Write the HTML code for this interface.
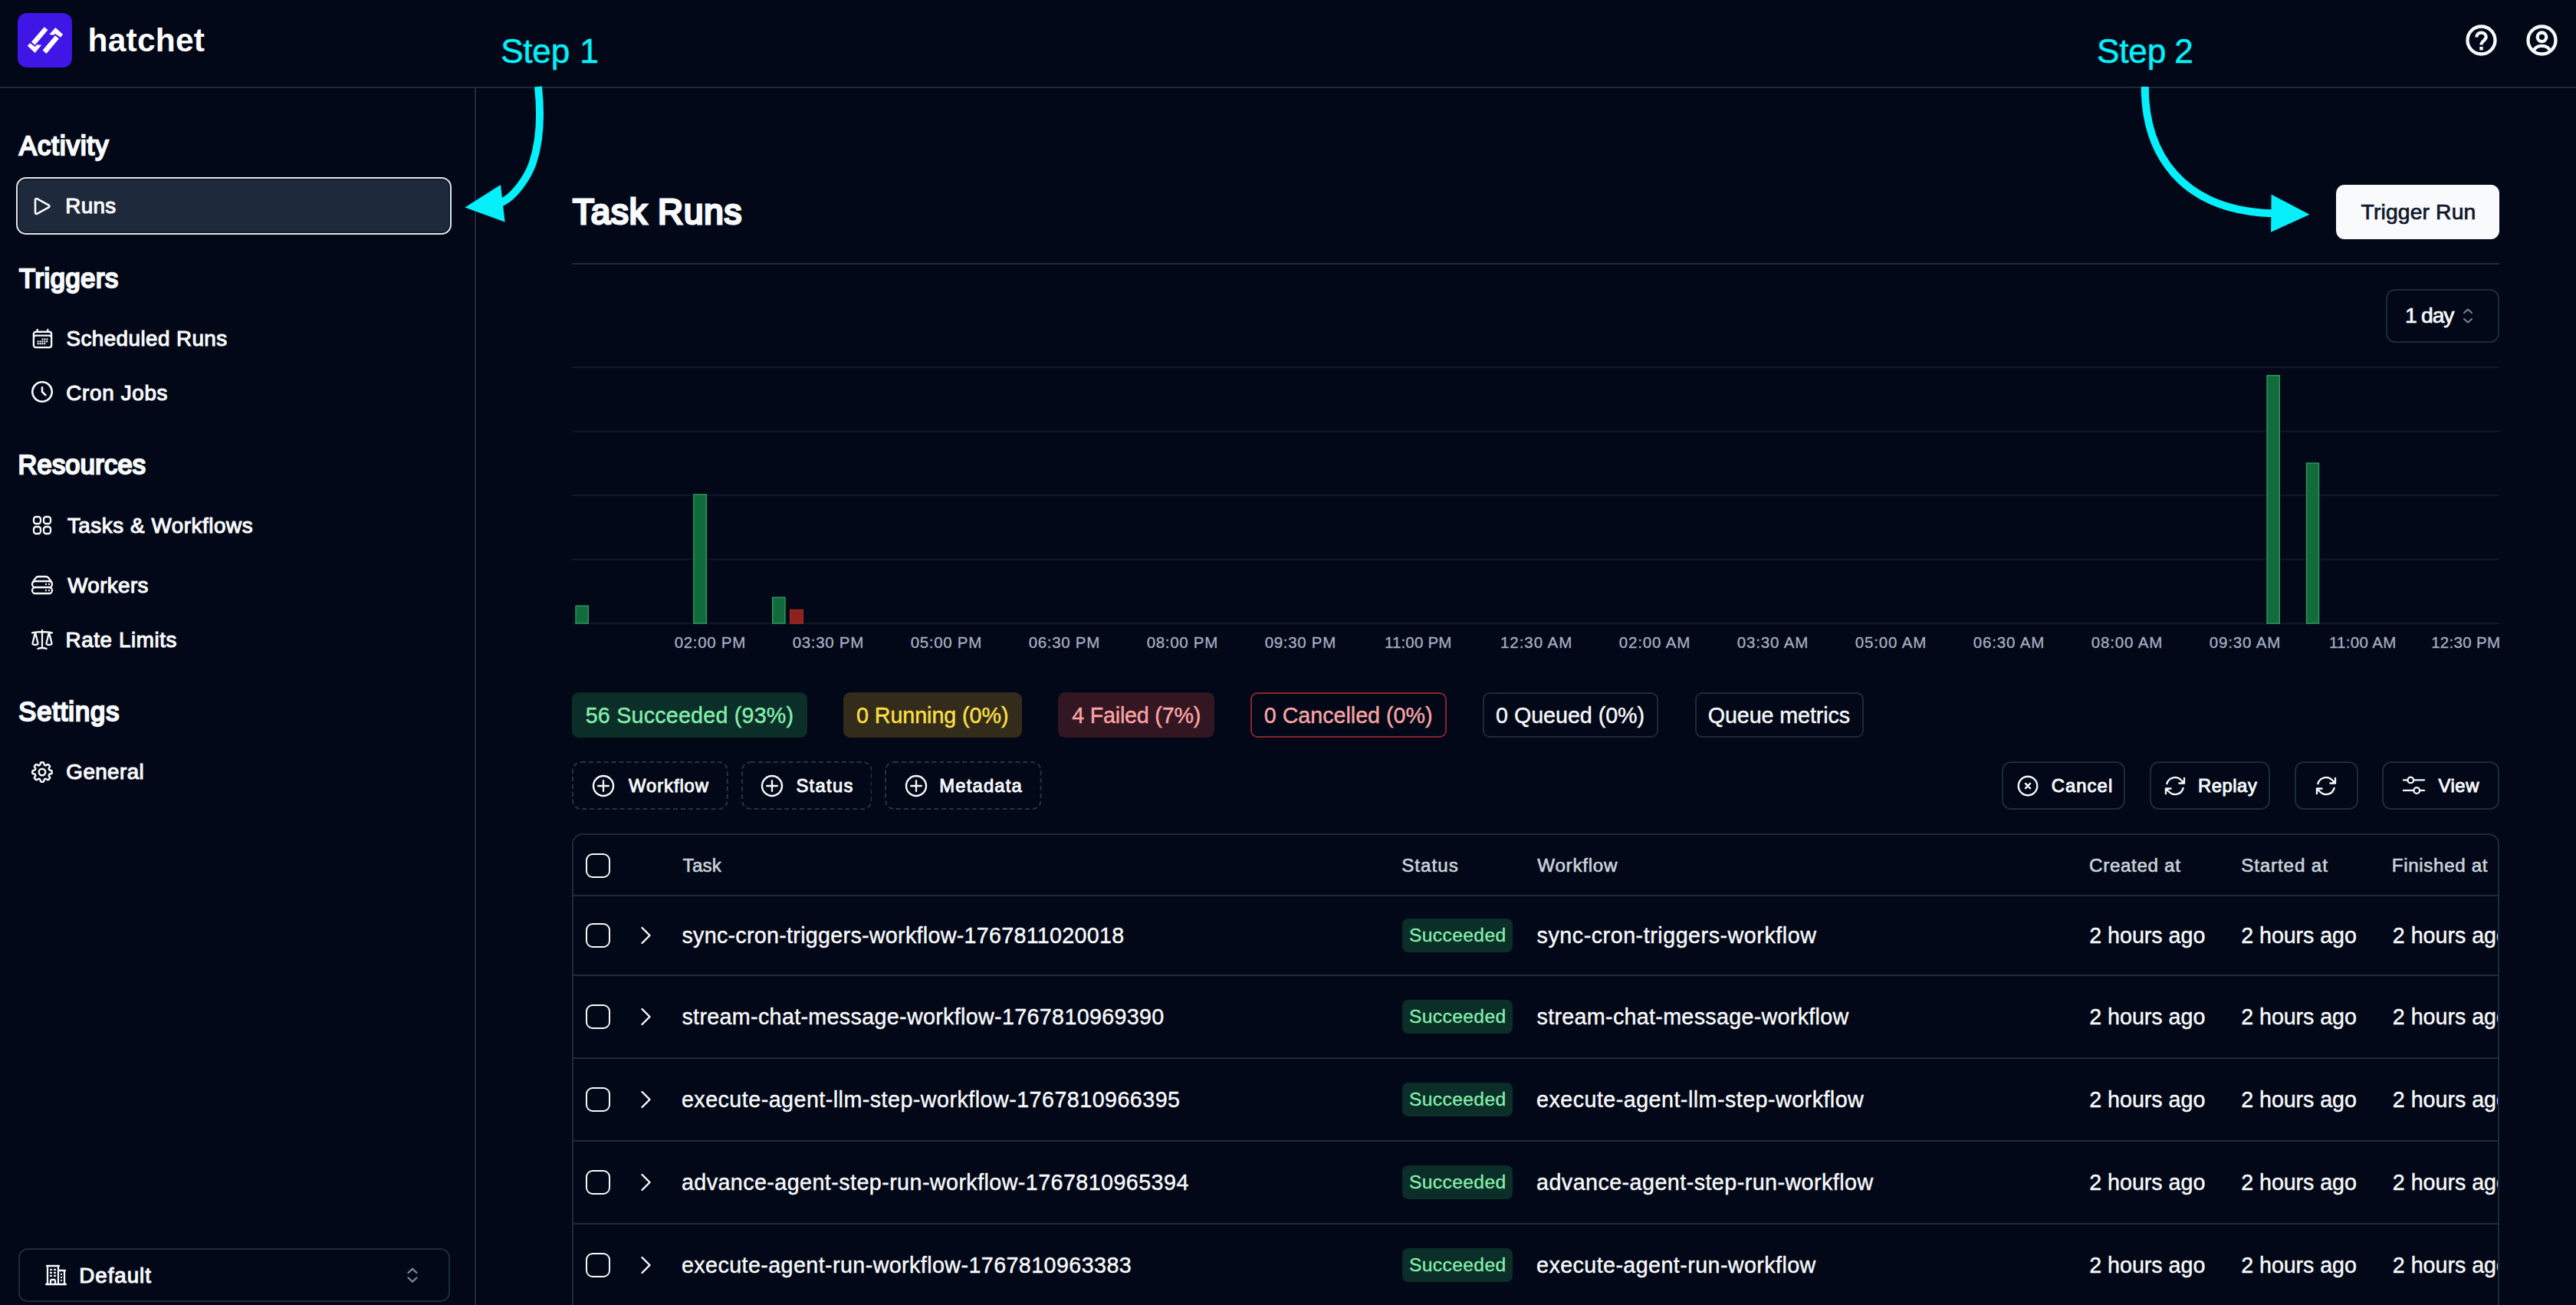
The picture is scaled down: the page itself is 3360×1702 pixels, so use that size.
<!DOCTYPE html>
<html lang="en"><head><meta charset="utf-8"><title>Task Runs - Hatchet</title>
<style>
html,body{margin:0;padding:0;background:#020817;}
body{width:3360px;height:1702px;position:relative;overflow:hidden;font-family:"Liberation Sans",sans-serif;color:#f8fafc;}
.t{position:absolute;white-space:nowrap;margin:0;padding:0;}
.b{position:absolute;box-sizing:border-box;margin:0;padding:0;}
</style></head><body>
<header>
<div class="b" style="left:0px;top:113.4px;width:3360px;height:2.0px;background:#1e293b;"></div>
<div class="b" style="left:23px;top:17px;width:71px;height:71px;background:#3f16e6;border-radius:12px;"></div>
<svg class="b" style="left:23px;top:17px;" width="71" height="71" viewBox="23 17 71 71" fill="none"><g fill="#ffffff"><polygon points="57.7,35.2 62.5,39.1 45.7,58.8 40.9,54.7"/><polygon points="39.1,56.2 45.7,60.9 48.4,58.2 54.1,58.8 45.7,69 35.8,59.7"/><polygon points="72,46.3 76.8,50.5 60.4,69.9 55.6,65.4"/><polygon points="72.3,36.1 82.2,45.1 78.9,48.7 72,43.9 69.6,45.7 64.3,45.1"/></g></svg>
<div class="t" style="left:114.60px;top:32.05px;font-size:42.5px;line-height:42.5px;letter-spacing:0.213px;color:#ffffff;font-weight:700;">hatchet</div>
<svg class="b" style="left:3212px;top:28px;" width="49" height="49" viewBox="0 0 49 49" fill="none"><circle cx="24.5" cy="24.5" r="18" stroke="#f8fafc" stroke-width="4.300"/><path d="M18.3 20.6c0-3.4 2.7-5.9 6.2-5.9s6.2 2.4 6.2 5.6c0 4.3-6.2 5.2-6.2 10.1" stroke="#f8fafc" stroke-width="4.300" fill="none"/><rect x="22.3" y="33" width="4.4" height="4.4" fill="#f8fafc"/></svg>
<svg class="b" style="left:3290.5px;top:28px;" width="49" height="49" viewBox="0 0 49 49" fill="none"><circle cx="24.5" cy="24.5" r="18" stroke="#f8fafc" stroke-width="4.300"/><circle cx="24.5" cy="20.3" r="5.8" stroke="#f8fafc" stroke-width="4.300"/><path d="M13.5 38.5c2-4.5 6-6.6 11-6.6s9 2.1 11 6.6" stroke="#f8fafc" stroke-width="4.300" fill="none"/></svg>
</header>
<aside>
<div class="b" style="left:618.5px;top:115px;width:2.0px;height:1587px;background:#1e293b;"></div>
<div class="t" style="left:25.01px;top:172.87px;font-size:34.4px;line-height:34.4px;letter-spacing:1.075px;color:#f8fafc;-webkit-text-stroke:2.27px #f8fafc;">Activity</div>
<div class="b" style="left:21px;top:231px;width:568px;height:75px;background:#1e293b;border:2.500px solid #dfe5ef;border-radius:13px;box-shadow:inset 0 0 0 1.400px #0c1424;"></div>
<svg class="b" style="left:39.00px;top:252.50px;" width="32" height="32" viewBox="0 0 24 24" fill="none"><g stroke="#f8fafc" stroke-width="1.95" stroke-linecap="round" stroke-linejoin="round"><path d="M5.25 5.653c0-.856.917-1.398 1.667-.986l11.54 6.347a1.125 1.125 0 0 1 0 1.972l-11.54 6.347a1.125 1.125 0 0 1-1.667-.986V5.653Z"/></g></svg>
<div class="t" style="left:85.28px;top:255.17px;font-size:27.8px;line-height:27.8px;letter-spacing:0.310px;color:#f8fafc;-webkit-text-stroke:1.06px #f8fafc;">Runs</div>
<div class="t" style="left:25.08px;top:346.27px;font-size:34.4px;line-height:34.4px;letter-spacing:0.609px;color:#f8fafc;-webkit-text-stroke:2.27px #f8fafc;">Triggers</div>
<svg class="b" style="left:39.50px;top:426.20px;" width="31" height="31" viewBox="0 0 24 24" fill="none"><g stroke="#f8fafc" stroke-width="1.8" stroke-linecap="round" stroke-linejoin="round"><path d="M6.75 3v2.25M17.25 3v2.25M3 18.75V7.5a2.25 2.25 0 0 1 2.25-2.25h13.5A2.25 2.25 0 0 1 21 7.5v11.25m-18 0A2.25 2.25 0 0 0 5.25 21h13.5A2.25 2.25 0 0 0 21 18.75m-18 0v-7.5A2.25 2.25 0 0 1 5.25 9h13.5A2.25 2.25 0 0 1 21 11.25v7.5m-9-6h.008v.008H12v-.008ZM12 15h.008v.008H12V15Zm0 2.25h.008v.008H12v-.008ZM9.75 15h.008v.008H9.75V15Zm0 2.25h.008v.008H9.75v-.008ZM7.5 15h.008v.008H7.5V15Zm0 2.25h.008v.008H7.5v-.008Zm6.75-4.5h.008v.008h-.008v-.008Zm0 2.25h.008v.008h-.008V15Zm0 2.25h.008v.008h-.008v-.008Zm2.25-4.5h.008v.008H16.5v-.008Zm0 2.25h.008v.008H16.5V15Z"/></g></svg>
<div class="t" style="left:86.48px;top:427.97px;font-size:27.8px;line-height:27.8px;letter-spacing:0.439px;color:#f8fafc;-webkit-text-stroke:1.06px #f8fafc;">Scheduled Runs</div>
<svg class="b" style="left:38.00px;top:494.20px;" width="34" height="34" viewBox="0 0 24 24" fill="none"><g stroke="#f8fafc" stroke-width="1.8" stroke-linecap="round" stroke-linejoin="round"><path d="M12 8v4l3 3m6-3a9 9 0 1 1-18 0 9 9 0 0 1 18 0z"/></g></svg>
<div class="t" style="left:86.35px;top:498.77px;font-size:27.8px;line-height:27.8px;letter-spacing:0.686px;color:#f8fafc;-webkit-text-stroke:1.06px #f8fafc;">Cron Jobs</div>
<div class="t" style="left:23.38px;top:589.46px;font-size:34.4px;line-height:34.4px;letter-spacing:0.280px;color:#f8fafc;-webkit-text-stroke:2.27px #f8fafc;">Resources</div>
<svg class="b" style="left:39.00px;top:668.80px;" width="32" height="32" viewBox="0 0 24 24" fill="none"><g stroke="#f8fafc" stroke-width="1.7" stroke-linecap="round" stroke-linejoin="round"><path d="M3.75 6A2.25 2.25 0 0 1 6 3.75h2.25A2.25 2.25 0 0 1 10.5 6v2.25a2.25 2.25 0 0 1-2.25 2.25H6a2.25 2.25 0 0 1-2.25-2.25V6ZM3.75 15.75A2.25 2.25 0 0 1 6 13.5h2.25a2.25 2.25 0 0 1 2.25 2.25V18a2.25 2.25 0 0 1-2.25 2.25H6A2.25 2.25 0 0 1 3.75 18v-2.25ZM13.5 6a2.25 2.25 0 0 1 2.25-2.25H18A2.25 2.25 0 0 1 20.25 6v2.25A2.25 2.25 0 0 1 18 10.5h-2.25a2.25 2.25 0 0 1-2.25-2.25V6ZM13.5 15.75a2.25 2.25 0 0 1 2.25-2.25H18a2.25 2.25 0 0 1 2.25 2.25V18A2.25 2.25 0 0 1 18 20.25h-2.25A2.25 2.25 0 0 1 13.5 18v-2.25Z"/></g></svg>
<div class="t" style="left:87.90px;top:671.77px;font-size:27.8px;line-height:27.8px;letter-spacing:0.561px;color:#f8fafc;-webkit-text-stroke:1.06px #f8fafc;">Tasks &amp; Workflows</div>
<svg class="b" style="left:39.00px;top:747.20px;" width="32" height="32" viewBox="0 0 24 24" fill="none"><g stroke="#f8fafc" stroke-width="1.7" stroke-linecap="round" stroke-linejoin="round"><path d="M5.25 14.25h13.5m-13.5 0a3 3 0 0 1-3-3m3 3a3 3 0 1 0 0 6h13.5a3 3 0 1 0 0-6m-16.5-3a3 3 0 0 1 3-3h13.5a3 3 0 0 1 3 3m-19.5 0a4.5 4.5 0 0 1 .9-2.7L5.737 5.1a3.375 3.375 0 0 1 2.7-1.35h7.126c1.062 0 2.062.5 2.7 1.35l2.587 3.45a4.5 4.5 0 0 1 .9 2.7m0 0a3 3 0 0 1-3 3m0 3h.008v.008h-.008v-.008Zm0-6h.008v.008h-.008v-.008Zm-3 6h.008v.008h-.008v-.008Zm0-6h.008v.008h-.008v-.008Z"/></g></svg>
<div class="t" style="left:88.20px;top:750.07px;font-size:27.8px;line-height:27.8px;letter-spacing:0.389px;color:#f8fafc;-webkit-text-stroke:1.06px #f8fafc;">Workers</div>
<svg class="b" style="left:39.00px;top:818.30px;" width="32" height="32" viewBox="0 0 24 24" fill="none"><g stroke="#f8fafc" stroke-width="1.7" stroke-linecap="round" stroke-linejoin="round"><path d="M12 3v17.25m0 0c-1.472 0-2.882.265-4.185.75M12 20.25c1.472 0 2.882.265 4.185.75M18.75 4.97A48.416 48.416 0 0 0 12 4.5c-2.291 0-4.545.16-6.75.47m13.5 0c1.01.143 2.01.317 3 .52m-3-.52 2.62 10.726c.122.499-.106 1.028-.589 1.202a5.988 5.988 0 0 1-2.031.352 5.988 5.988 0 0 1-2.031-.352c-.483-.174-.711-.703-.59-1.202L18.75 4.971Zm-16.5.52c.99-.203 1.99-.377 3-.52m0 0 2.62 10.726c.122.499-.106 1.028-.589 1.202a5.989 5.989 0 0 1-2.031.352 5.989 5.989 0 0 1-2.031-.352c-.483-.174-.711-.703-.59-1.202L5.25 4.971Z"/></g></svg>
<div class="t" style="left:85.48px;top:820.77px;font-size:27.8px;line-height:27.8px;letter-spacing:0.600px;color:#f8fafc;-webkit-text-stroke:1.06px #f8fafc;">Rate Limits</div>
<div class="t" style="left:24.21px;top:911.06px;font-size:34.4px;line-height:34.4px;letter-spacing:0.995px;color:#f8fafc;-webkit-text-stroke:2.27px #f8fafc;">Settings</div>
<svg class="b" style="left:38.00px;top:990.00px;" width="34" height="34" viewBox="0 0 24 24" fill="none"><g stroke="#f8fafc" stroke-width="1.75" stroke-linecap="round" stroke-linejoin="round"><path d="M10.343 3.94c.09-.542.56-.94 1.11-.94h1.093c.55 0 1.02.398 1.11.94l.149.894c.07.424.384.764.78.93.398.164.855.142 1.205-.108l.737-.527a1.125 1.125 0 0 1 1.45.12l.773.774c.39.389.44 1.002.12 1.45l-.527.737c-.25.35-.272.806-.107 1.204.165.397.505.71.93.78l.893.15c.543.09.94.559.94 1.109v1.094c0 .55-.397 1.02-.94 1.11l-.894.149c-.424.07-.764.383-.929.78-.165.398-.143.854.107 1.204l.527.738c.32.447.269 1.06-.12 1.45l-.774.773a1.125 1.125 0 0 1-1.449.12l-.738-.527c-.35-.25-.806-.272-1.203-.107-.398.165-.71.505-.781.929l-.149.894c-.09.542-.56.94-1.11.94h-1.094c-.55 0-1.019-.398-1.11-.94l-.148-.894c-.071-.424-.384-.764-.781-.93-.398-.164-.854-.142-1.204.108l-.738.527c-.447.32-1.06.269-1.45-.12l-.773-.774a1.125 1.125 0 0 1-.12-1.45l.527-.737c.25-.35.272-.806.108-1.204-.165-.397-.506-.71-.93-.78l-.894-.15c-.542-.09-.94-.56-.94-1.109v-1.094c0-.55.398-1.02.94-1.11l.894-.149c.424-.07.765-.383.93-.78.165-.398.143-.854-.108-1.204l-.526-.738a1.125 1.125 0 0 1 .12-1.45l.773-.773a1.125 1.125 0 0 1 1.45-.12l.737.527c.35.25.807.272 1.204.107.397-.165.71-.505.78-.929l.15-.894Z M15 12a3 3 0 1 1-6 0 3 3 0 0 1 6 0Z"/></g></svg>
<div class="t" style="left:86.35px;top:993.27px;font-size:27.8px;line-height:27.8px;letter-spacing:0.411px;color:#f8fafc;-webkit-text-stroke:1.06px #f8fafc;">General</div>
<div class="b" style="left:24px;top:1628px;width:563px;height:70px;border:2px solid #1e293b;border-radius:12px;"></div>
<svg class="b" style="left:56.50px;top:1647.00px;" width="32" height="32" viewBox="0 0 24 24" fill="none"><g stroke="#f8fafc" stroke-width="1.7" stroke-linecap="round" stroke-linejoin="round"><path d="M2.25 21h19.5m-18-18v18m10.5-18v18m6-13.5V21M6.75 6.75h.75m-.75 3h.75m-.75 3h.75m3-6h.75m-.75 3h.75m-.75 3h.75M6.75 21v-3.375c0-.621.504-1.125 1.125-1.125h2.25c.621 0 1.125.504 1.125 1.125V21M3 3h12m-.75 4.500H21m-3.750 3.750h.008v.008h-.008v-.008Zm0 3h.008v.008h-.008v-.008Zm0 3h.008v.008h-.008v-.008Z"/></g></svg>
<div class="t" style="left:103.28px;top:1649.57px;font-size:27.8px;line-height:27.8px;letter-spacing:0.931px;color:#f8fafc;-webkit-text-stroke:1.06px #f8fafc;">Default</div>
<svg class="b" style="left:526px;top:1651px;" width="24" height="24" viewBox="0 0 24 24" fill="none"><g stroke="#7b8496" stroke-width="2.4" stroke-linecap="round" stroke-linejoin="round"><path d="M6.5 9 12 3.8 17.500 9"/><path d="M6.5 15.500 12 20.700 17.500 15.500"/></g></svg>
</aside>
<main>
<div class="t" style="left:747.11px;top:254.29px;font-size:45.8px;line-height:45.8px;letter-spacing:0.819px;color:#f8fafc;-webkit-text-stroke:3.02px #f8fafc;">Task Runs</div>
<div class="b" style="left:3047px;top:241px;width:213px;height:71px;background:#f8fafc;border-radius:11px;"></div>
<div class="t" style="left:3079.53px;top:261.60px;font-size:28.3px;line-height:28.3px;letter-spacing:0.141px;color:#0f172a;-webkit-text-stroke:0.71px #0f172a;">Trigger Run</div>
<div class="b" style="left:746px;top:343px;width:2514px;height:2px;background:#1e293b;"></div>
<div class="b" style="left:3112px;top:377px;width:148px;height:70px;border:2px solid #1e293b;border-radius:12px;"></div>
<div class="t" style="left:3136.93px;top:397.00px;font-size:28.3px;line-height:28.3px;letter-spacing:-1.201px;color:#f8fafc;-webkit-text-stroke:0.71px #f8fafc;">1 day</div>
<svg class="b" style="left:3209px;top:400px;" width="20" height="24" viewBox="0 0 20 24" fill="none"><g stroke="#7b8496" stroke-width="2" stroke-linecap="round" stroke-linejoin="round"><path d="M5 8 10 3.500 15 8"/><path d="M5 16 10 20.500 15 16"/></g></svg>
<svg class="b" style="left:0px;top:0px;" width="3360" height="900" viewBox="0 0 3360 900" fill="none"><rect x="746" y="478" width="2514" height="2" fill="#0f1727"/><rect x="746" y="561.5" width="2514" height="2" fill="#0f1727"/><rect x="746" y="645" width="2514" height="2" fill="#0f1727"/><rect x="746" y="728.5" width="2514" height="2" fill="#0f1727"/><rect x="746" y="812" width="2514" height="2" fill="#0f1727"/><rect x="751.05" y="790.25" width="16.200000000000045" height="22.75" fill="#126b3c" stroke="#2b9659" stroke-width="1.5"/><rect x="904.85" y="644.95" width="16.5" height="168.04999999999995" fill="#126b3c" stroke="#2b9659" stroke-width="1.5"/><rect x="1007.75" y="779.15" width="16.200000000000045" height="33.85000000000002" fill="#126b3c" stroke="#2b9659" stroke-width="1.5"/><rect x="1030.75" y="795.45" width="16.5" height="17.549999999999955" fill="#8f211d" stroke="#9c2a24" stroke-width="1.5"/><rect x="2957.05" y="489.75" width="16.199999999999818" height="323.25" fill="#126b3c" stroke="#2b9659" stroke-width="1.5"/><rect x="3008.55" y="604.05" width="16.0" height="208.95000000000005" fill="#126b3c" stroke="#2b9659" stroke-width="1.5"/></svg>
<div class="t" style="left:879.64px;top:828.31px;font-size:20.5px;line-height:20.5px;letter-spacing:0.709px;color:#a7afc3;-webkit-text-stroke:0.29px #a7afc3;">02:00 PM</div>
<div class="t" style="left:1033.64px;top:828.31px;font-size:20.5px;line-height:20.5px;letter-spacing:0.709px;color:#a7afc3;-webkit-text-stroke:0.29px #a7afc3;">03:30 PM</div>
<div class="t" style="left:1187.64px;top:828.31px;font-size:20.5px;line-height:20.5px;letter-spacing:0.709px;color:#a7afc3;-webkit-text-stroke:0.29px #a7afc3;">05:00 PM</div>
<div class="t" style="left:1341.64px;top:828.31px;font-size:20.5px;line-height:20.5px;letter-spacing:0.709px;color:#a7afc3;-webkit-text-stroke:0.29px #a7afc3;">06:30 PM</div>
<div class="t" style="left:1495.64px;top:828.31px;font-size:20.5px;line-height:20.5px;letter-spacing:0.709px;color:#a7afc3;-webkit-text-stroke:0.29px #a7afc3;">08:00 PM</div>
<div class="t" style="left:1649.64px;top:828.31px;font-size:20.5px;line-height:20.5px;letter-spacing:0.709px;color:#a7afc3;-webkit-text-stroke:0.29px #a7afc3;">09:30 PM</div>
<div class="t" style="left:1805.89px;top:828.31px;font-size:20.5px;line-height:20.5px;letter-spacing:0.173px;color:#a7afc3;-webkit-text-stroke:0.29px #a7afc3;">11:00 PM</div>
<div class="t" style="left:1956.89px;top:828.31px;font-size:20.5px;line-height:20.5px;letter-spacing:0.976px;color:#a7afc3;-webkit-text-stroke:0.29px #a7afc3;">12:30 AM</div>
<div class="t" style="left:2111.64px;top:828.31px;font-size:20.5px;line-height:20.5px;letter-spacing:0.869px;color:#a7afc3;-webkit-text-stroke:0.29px #a7afc3;">02:00 AM</div>
<div class="t" style="left:2265.64px;top:828.31px;font-size:20.5px;line-height:20.5px;letter-spacing:0.869px;color:#a7afc3;-webkit-text-stroke:0.29px #a7afc3;">03:30 AM</div>
<div class="t" style="left:2419.64px;top:828.31px;font-size:20.5px;line-height:20.5px;letter-spacing:0.869px;color:#a7afc3;-webkit-text-stroke:0.29px #a7afc3;">05:00 AM</div>
<div class="t" style="left:2573.64px;top:828.31px;font-size:20.5px;line-height:20.5px;letter-spacing:0.869px;color:#a7afc3;-webkit-text-stroke:0.29px #a7afc3;">06:30 AM</div>
<div class="t" style="left:2727.64px;top:828.31px;font-size:20.5px;line-height:20.5px;letter-spacing:0.869px;color:#a7afc3;-webkit-text-stroke:0.29px #a7afc3;">08:00 AM</div>
<div class="t" style="left:2881.64px;top:828.31px;font-size:20.5px;line-height:20.5px;letter-spacing:0.869px;color:#a7afc3;-webkit-text-stroke:0.29px #a7afc3;">09:30 AM</div>
<div class="t" style="left:3037.89px;top:828.31px;font-size:20.5px;line-height:20.5px;letter-spacing:0.334px;color:#a7afc3;-webkit-text-stroke:0.29px #a7afc3;">11:00 AM</div>
<div class="t" style="left:3171.14px;top:828.31px;font-size:20.5px;line-height:20.5px;letter-spacing:0.316px;color:#a7afc3;-webkit-text-stroke:0.29px #a7afc3;">12:30 PM</div>
<div class="b" style="left:746.4px;top:903px;width:306.30000000000007px;height:58.5px;background:#0b2e28;border-radius:9px;"></div>
<div class="t" style="left:763.68px;top:918.75px;font-size:28.7px;line-height:28.7px;letter-spacing:0.208px;color:#86efac;-webkit-text-stroke:0.4px #86efac;">56 Succeeded (93%)</div>
<div class="b" style="left:1099.7px;top:903px;width:233.70000000000005px;height:58.5px;background:#342c1a;border-radius:9px;"></div>
<div class="t" style="left:1116.98px;top:918.75px;font-size:28.7px;line-height:28.7px;letter-spacing:-0.064px;color:#fde047;-webkit-text-stroke:0.4px #fde047;">0 Running (0%)</div>
<div class="b" style="left:1380.3px;top:903px;width:203.4000000000001px;height:58.5px;background:#321622;border-radius:9px;"></div>
<div class="t" style="left:1398.18px;top:918.75px;font-size:28.7px;line-height:28.7px;letter-spacing:-0.209px;color:#fca5a5;-webkit-text-stroke:0.4px #fca5a5;">4 Failed (7%)</div>
<div class="b" style="left:1631px;top:903px;width:255.5px;height:58.5px;border:2px solid #88252a;border-radius:9px;"></div>
<div class="t" style="left:1648.78px;top:918.75px;font-size:28.7px;line-height:28.7px;letter-spacing:-0.023px;color:#fca5a5;-webkit-text-stroke:0.4px #fca5a5;">0 Cancelled (0%)</div>
<div class="b" style="left:1934px;top:903px;width:229px;height:58.5px;border:2px solid #1e293b;border-radius:9px;"></div>
<div class="t" style="left:1951.08px;top:918.75px;font-size:28.7px;line-height:28.7px;letter-spacing:-0.047px;color:#f8fafc;-webkit-text-stroke:0.4px #f8fafc;">0 Queued (0%)</div>
<div class="b" style="left:2210.6px;top:903px;width:220.0999999999999px;height:58.5px;border:2px solid #1e293b;border-radius:9px;"></div>
<div class="t" style="left:2227.73px;top:918.75px;font-size:28.7px;line-height:28.7px;letter-spacing:-0.092px;color:#f8fafc;-webkit-text-stroke:0.4px #f8fafc;">Queue metrics</div>
<svg class="b" style="left:746.4px;top:993px" width="203.8" height="63" fill="none"><rect x="1" y="1" width="201.8" height="61" rx="11" stroke="#283145" stroke-width="2" stroke-dasharray="6 3.900"/></svg>
<svg class="b" style="left:771.20px;top:1008.8px;" width="32" height="32" viewBox="0 0 32 32" fill="none"><g stroke="#f8fafc" fill="none" stroke-linecap="round"><circle cx="16" cy="16" r="13" stroke-width="2.4"/><path d="M16 9.100v13.800M9.100 16h13.800" stroke-width="2.300"/></g></svg>
<div class="t" style="left:820.12px;top:1013.15px;font-size:23.8px;line-height:23.8px;letter-spacing:0.921px;color:#f8fafc;-webkit-text-stroke:0.9px #f8fafc;">Workflow</div>
<svg class="b" style="left:966.5px;top:993px" width="170.8" height="63" fill="none"><rect x="1" y="1" width="168.8" height="61" rx="11" stroke="#283145" stroke-width="2" stroke-dasharray="6 3.900"/></svg>
<svg class="b" style="left:991.30px;top:1008.8px;" width="32" height="32" viewBox="0 0 32 32" fill="none"><g stroke="#f8fafc" fill="none" stroke-linecap="round"><circle cx="16" cy="16" r="13" stroke-width="2.4"/><path d="M16 9.100v13.800M9.100 16h13.800" stroke-width="2.300"/></g></svg>
<div class="t" style="left:1038.42px;top:1013.15px;font-size:23.8px;line-height:23.8px;letter-spacing:1.317px;color:#f8fafc;-webkit-text-stroke:0.9px #f8fafc;">Status</div>
<svg class="b" style="left:1154px;top:993px" width="204.6" height="63" fill="none"><rect x="1" y="1" width="202.6" height="61" rx="11" stroke="#283145" stroke-width="2" stroke-dasharray="6 3.900"/></svg>
<svg class="b" style="left:1178.80px;top:1008.8px;" width="32" height="32" viewBox="0 0 32 32" fill="none"><g stroke="#f8fafc" fill="none" stroke-linecap="round"><circle cx="16" cy="16" r="13" stroke-width="2.4"/><path d="M16 9.100v13.800M9.100 16h13.800" stroke-width="2.300"/></g></svg>
<div class="t" style="left:1225.17px;top:1013.15px;font-size:23.8px;line-height:23.8px;letter-spacing:1.206px;color:#f8fafc;-webkit-text-stroke:0.9px #f8fafc;">Metadata</div>
<div class="b" style="left:2611px;top:993px;width:161px;height:62.59999999999991px;border:2px solid #1e293b;border-radius:12px;"></div>
<svg class="b" style="left:2628.50px;top:1008.60px;" width="32" height="32" viewBox="0 0 24 24" fill="none"><g stroke="#f8fafc" stroke-width="1.75" stroke-linecap="round" stroke-linejoin="round"><circle cx="12" cy="12" r="9.200"/><path d="m9.700 9.700 4.600 4.600m0-4.600-4.600 4.600"/></g></svg>
<div class="t" style="left:2675.70px;top:1013.15px;font-size:23.8px;line-height:23.8px;letter-spacing:1.085px;color:#f8fafc;-webkit-text-stroke:0.9px #f8fafc;">Cancel</div>
<div class="b" style="left:2804px;top:993px;width:157px;height:62.59999999999991px;border:2px solid #1e293b;border-radius:12px;"></div>
<svg class="b" style="left:2821.00px;top:1008.60px;" width="32" height="32" viewBox="0 0 24 24" fill="none"><g stroke="#f8fafc" stroke-width="1.75" stroke-linecap="round" stroke-linejoin="round"><path d="M16.023 9.348h4.992v-.001M2.985 19.644v-4.992m0 0h4.992m-4.993 0 3.181 3.183a8.25 8.25 0 0 0 13.803-3.700M4.031 9.865a8.25 8.25 0 0 1 13.803-3.700l3.181 3.182m0-4.991v4.990"/></g></svg>
<div class="t" style="left:2866.97px;top:1013.15px;font-size:23.8px;line-height:23.8px;letter-spacing:0.550px;color:#f8fafc;-webkit-text-stroke:0.9px #f8fafc;">Replay</div>
<div class="b" style="left:2993px;top:993px;width:82.5px;height:62.59999999999991px;border:2px solid #1e293b;border-radius:12px;"></div>
<svg class="b" style="left:3018.20px;top:1008.60px;" width="32" height="32" viewBox="0 0 24 24" fill="none"><g stroke="#f8fafc" stroke-width="1.75" stroke-linecap="round" stroke-linejoin="round"><path d="M16.023 9.348h4.992v-.001M2.985 19.644v-4.992m0 0h4.992m-4.993 0 3.181 3.183a8.25 8.25 0 0 0 13.803-3.700M4.031 9.865a8.25 8.25 0 0 1 13.803-3.700l3.181 3.182m0-4.991v4.990"/></g></svg>
<div class="b" style="left:3107px;top:993px;width:153px;height:62.59999999999991px;border:2px solid #1e293b;border-radius:12px;"></div>
<svg class="b" style="left:3132.50px;top:1009.10px;" width="31" height="31" viewBox="0 0 24 24" fill="none"><g stroke="#f8fafc" stroke-width="1.75" stroke-linecap="round" stroke-linejoin="round"><path d="M1.500 6.500h4.300M11.700 6.500h10.800M1.500 17h10.400M17.900 17h4.600"/><circle cx="8.750" cy="6.500" r="2.950"/><circle cx="14.900" cy="17" r="2.950"/></g></svg>
<div class="t" style="left:3180.52px;top:1013.15px;font-size:23.8px;line-height:23.8px;letter-spacing:0.564px;color:#f8fafc;-webkit-text-stroke:0.9px #f8fafc;">View</div>
<section>
<div class="b" style="left:746px;top:1087px;width:2514px;height:643px;border:2px solid #1e293b;border-radius:14px 14px 0 0;"></div>
<div class="b" style="left:764px;top:1113px;width:32px;height:32px;border:2.5px solid #f8fafc;border-radius:9px;"></div>
<div class="t" style="left:890.60px;top:1117.40px;font-size:24.2px;line-height:24.2px;letter-spacing:0.209px;color:#cbd2dd;-webkit-text-stroke:0.6px #cbd2dd;">Task</div>
<div class="t" style="left:1828.18px;top:1117.40px;font-size:24.2px;line-height:24.2px;letter-spacing:1.038px;color:#cbd2dd;-webkit-text-stroke:0.6px #cbd2dd;">Status</div>
<div class="t" style="left:2005.28px;top:1117.40px;font-size:24.2px;line-height:24.2px;letter-spacing:0.751px;color:#cbd2dd;-webkit-text-stroke:0.6px #cbd2dd;">Workflow</div>
<div class="t" style="left:2725.05px;top:1117.40px;font-size:24.2px;line-height:24.2px;letter-spacing:0.662px;color:#cbd2dd;-webkit-text-stroke:0.6px #cbd2dd;">Created at</div>
<div class="t" style="left:2923.18px;top:1117.40px;font-size:24.2px;line-height:24.2px;letter-spacing:0.871px;color:#cbd2dd;-webkit-text-stroke:0.6px #cbd2dd;">Started at</div>
<div class="t" style="left:3119.80px;top:1117.40px;font-size:24.2px;line-height:24.2px;letter-spacing:0.644px;color:#cbd2dd;-webkit-text-stroke:0.6px #cbd2dd;">Finished at</div>
<div class="b" style="left:748px;top:1089px;width:2510px;height:613px;overflow:hidden;">
<div class="b" style="left:0px;top:78px;width:2510px;height:2px;background:#1e293b;"></div>
<div class="b" style="left:16px;top:115.0px;width:32px;height:32.0px;border:2.5px solid #f8fafc;border-radius:9px;"></div>
<svg class="b" style="left:84px;top:117.0px" width="22" height="28" viewBox="0 0 22 28" fill="none"><path d="M5.500 4 15.500 14 5.500 24" stroke="#f8fafc" stroke-width="2.400" stroke-linecap="round" stroke-linejoin="round"/></svg>
<div class="t" style="left:141.45px;top:116.75px;font-size:28.7px;line-height:28.7px;letter-spacing:0.278px;color:#f8fafc;-webkit-text-stroke:0.4px #f8fafc;">sync-cron-triggers-workflow-1767811020018</div>
<div class="b" style="left:1080.5px;top:109.20000000000005px;width:144.0999999999999px;height:43.59999999999991px;background:#0b2e28;border-radius:8px;"></div>
<div class="t" style="left:1089.95px;top:119.23px;font-size:24.6px;line-height:24.6px;letter-spacing:0.398px;color:#86efac;-webkit-text-stroke:0.34px #86efac;">Succeeded</div>
<div class="t" style="left:1256.55px;top:116.75px;font-size:28.7px;line-height:28.7px;letter-spacing:0.524px;color:#f8fafc;-webkit-text-stroke:0.4px #f8fafc;">sync-cron-triggers-workflow</div>
<div class="t" style="left:1977.23px;top:116.75px;font-size:28.7px;line-height:28.7px;letter-spacing:-0.039px;color:#f8fafc;-webkit-text-stroke:0.4px #f8fafc;">2 hours ago</div>
<div class="t" style="left:2175.33px;top:116.75px;font-size:28.7px;line-height:28.7px;letter-spacing:-0.099px;color:#f8fafc;-webkit-text-stroke:0.4px #f8fafc;">2 hours ago</div>
<div class="t" style="left:2372.83px;top:116.75px;font-size:28.7px;line-height:28.7px;letter-spacing:-0.039px;color:#f8fafc;-webkit-text-stroke:0.4px #f8fafc;">2 hours ago</div>
<div class="b" style="left:0px;top:182px;width:2510px;height:2px;background:#1e293b;"></div>
<div class="b" style="left:16px;top:221.0px;width:32px;height:32.0px;border:2.5px solid #f8fafc;border-radius:9px;"></div>
<svg class="b" style="left:84px;top:223.0px" width="22" height="28" viewBox="0 0 22 28" fill="none"><path d="M5.500 4 15.500 14 5.500 24" stroke="#f8fafc" stroke-width="2.400" stroke-linecap="round" stroke-linejoin="round"/></svg>
<div class="t" style="left:141.45px;top:222.75px;font-size:28.7px;line-height:28.7px;letter-spacing:0.326px;color:#f8fafc;-webkit-text-stroke:0.4px #f8fafc;">stream-chat-message-workflow-1767810969390</div>
<div class="b" style="left:1080.5px;top:215.20000000000005px;width:144.0999999999999px;height:43.59999999999991px;background:#0b2e28;border-radius:8px;"></div>
<div class="t" style="left:1089.95px;top:225.23px;font-size:24.6px;line-height:24.6px;letter-spacing:0.398px;color:#86efac;-webkit-text-stroke:0.34px #86efac;">Succeeded</div>
<div class="t" style="left:1256.55px;top:222.75px;font-size:28.7px;line-height:28.7px;letter-spacing:0.302px;color:#f8fafc;-webkit-text-stroke:0.4px #f8fafc;">stream-chat-message-workflow</div>
<div class="t" style="left:1977.23px;top:222.75px;font-size:28.7px;line-height:28.7px;letter-spacing:-0.039px;color:#f8fafc;-webkit-text-stroke:0.4px #f8fafc;">2 hours ago</div>
<div class="t" style="left:2175.33px;top:222.75px;font-size:28.7px;line-height:28.7px;letter-spacing:-0.099px;color:#f8fafc;-webkit-text-stroke:0.4px #f8fafc;">2 hours ago</div>
<div class="t" style="left:2372.83px;top:222.75px;font-size:28.7px;line-height:28.7px;letter-spacing:-0.039px;color:#f8fafc;-webkit-text-stroke:0.4px #f8fafc;">2 hours ago</div>
<div class="b" style="left:0px;top:290px;width:2510px;height:2px;background:#1e293b;"></div>
<div class="b" style="left:16px;top:329.0px;width:32px;height:32.0px;border:2.5px solid #f8fafc;border-radius:9px;"></div>
<svg class="b" style="left:84px;top:331.0px" width="22" height="28" viewBox="0 0 22 28" fill="none"><path d="M5.500 4 15.500 14 5.500 24" stroke="#f8fafc" stroke-width="2.400" stroke-linecap="round" stroke-linejoin="round"/></svg>
<div class="t" style="left:140.95px;top:330.75px;font-size:28.7px;line-height:28.7px;letter-spacing:0.460px;color:#f8fafc;-webkit-text-stroke:0.4px #f8fafc;">execute-agent-llm-step-workflow-1767810966395</div>
<div class="b" style="left:1080.5px;top:323.20000000000005px;width:144.0999999999999px;height:43.59999999999991px;background:#0b2e28;border-radius:8px;"></div>
<div class="t" style="left:1089.95px;top:333.23px;font-size:24.6px;line-height:24.6px;letter-spacing:0.398px;color:#86efac;-webkit-text-stroke:0.34px #86efac;">Succeeded</div>
<div class="t" style="left:1256.05px;top:330.75px;font-size:28.7px;line-height:28.7px;letter-spacing:0.462px;color:#f8fafc;-webkit-text-stroke:0.4px #f8fafc;">execute-agent-llm-step-workflow</div>
<div class="t" style="left:1977.23px;top:330.75px;font-size:28.7px;line-height:28.7px;letter-spacing:-0.039px;color:#f8fafc;-webkit-text-stroke:0.4px #f8fafc;">2 hours ago</div>
<div class="t" style="left:2175.33px;top:330.75px;font-size:28.7px;line-height:28.7px;letter-spacing:-0.099px;color:#f8fafc;-webkit-text-stroke:0.4px #f8fafc;">2 hours ago</div>
<div class="t" style="left:2372.83px;top:330.75px;font-size:28.7px;line-height:28.7px;letter-spacing:-0.039px;color:#f8fafc;-webkit-text-stroke:0.4px #f8fafc;">2 hours ago</div>
<div class="b" style="left:0px;top:398px;width:2510px;height:2px;background:#1e293b;"></div>
<div class="b" style="left:16px;top:437.0px;width:32px;height:32.0px;border:2.5px solid #f8fafc;border-radius:9px;"></div>
<svg class="b" style="left:84px;top:439.0px" width="22" height="28" viewBox="0 0 22 28" fill="none"><path d="M5.500 4 15.500 14 5.500 24" stroke="#f8fafc" stroke-width="2.400" stroke-linecap="round" stroke-linejoin="round"/></svg>
<div class="t" style="left:140.95px;top:438.75px;font-size:28.7px;line-height:28.7px;letter-spacing:0.425px;color:#f8fafc;-webkit-text-stroke:0.4px #f8fafc;">advance-agent-step-run-workflow-1767810965394</div>
<div class="b" style="left:1080.5px;top:431.20000000000005px;width:144.0999999999999px;height:43.59999999999991px;background:#0b2e28;border-radius:8px;"></div>
<div class="t" style="left:1089.95px;top:441.23px;font-size:24.6px;line-height:24.6px;letter-spacing:0.398px;color:#86efac;-webkit-text-stroke:0.34px #86efac;">Succeeded</div>
<div class="t" style="left:1256.05px;top:438.75px;font-size:28.7px;line-height:28.7px;letter-spacing:0.445px;color:#f8fafc;-webkit-text-stroke:0.4px #f8fafc;">advance-agent-step-run-workflow</div>
<div class="t" style="left:1977.23px;top:438.75px;font-size:28.7px;line-height:28.7px;letter-spacing:-0.039px;color:#f8fafc;-webkit-text-stroke:0.4px #f8fafc;">2 hours ago</div>
<div class="t" style="left:2175.33px;top:438.75px;font-size:28.7px;line-height:28.7px;letter-spacing:-0.099px;color:#f8fafc;-webkit-text-stroke:0.4px #f8fafc;">2 hours ago</div>
<div class="t" style="left:2372.83px;top:438.75px;font-size:28.7px;line-height:28.7px;letter-spacing:-0.039px;color:#f8fafc;-webkit-text-stroke:0.4px #f8fafc;">2 hours ago</div>
<div class="b" style="left:0px;top:506px;width:2510px;height:2px;background:#1e293b;"></div>
<div class="b" style="left:16px;top:545.0px;width:32px;height:32.0px;border:2.5px solid #f8fafc;border-radius:9px;"></div>
<svg class="b" style="left:84px;top:547.0px" width="22" height="28" viewBox="0 0 22 28" fill="none"><path d="M5.500 4 15.500 14 5.500 24" stroke="#f8fafc" stroke-width="2.400" stroke-linecap="round" stroke-linejoin="round"/></svg>
<div class="t" style="left:140.95px;top:546.75px;font-size:28.7px;line-height:28.7px;letter-spacing:0.406px;color:#f8fafc;-webkit-text-stroke:0.4px #f8fafc;">execute-agent-run-workflow-1767810963383</div>
<div class="b" style="left:1080.5px;top:539.2px;width:144.0999999999999px;height:43.59999999999991px;background:#0b2e28;border-radius:8px;"></div>
<div class="t" style="left:1089.95px;top:549.23px;font-size:24.6px;line-height:24.6px;letter-spacing:0.398px;color:#86efac;-webkit-text-stroke:0.34px #86efac;">Succeeded</div>
<div class="t" style="left:1256.05px;top:546.75px;font-size:28.7px;line-height:28.7px;letter-spacing:0.412px;color:#f8fafc;-webkit-text-stroke:0.4px #f8fafc;">execute-agent-run-workflow</div>
<div class="t" style="left:1977.23px;top:546.75px;font-size:28.7px;line-height:28.7px;letter-spacing:-0.039px;color:#f8fafc;-webkit-text-stroke:0.4px #f8fafc;">2 hours ago</div>
<div class="t" style="left:2175.33px;top:546.75px;font-size:28.7px;line-height:28.7px;letter-spacing:-0.099px;color:#f8fafc;-webkit-text-stroke:0.4px #f8fafc;">2 hours ago</div>
<div class="t" style="left:2372.83px;top:546.75px;font-size:28.7px;line-height:28.7px;letter-spacing:-0.039px;color:#f8fafc;-webkit-text-stroke:0.4px #f8fafc;">2 hours ago</div>
</div>
</section>
</main>
<div class="t" style="left:653.15px;top:44.65px;font-size:44.2px;line-height:44.2px;letter-spacing:-0.276px;word-spacing:1.320px;color:#05f0fa;-webkit-text-stroke:0.5px #05f0fa;">Step 1</div>
<div class="t" style="left:2735.05px;top:44.65px;font-size:44.2px;line-height:44.2px;letter-spacing:-0.242px;word-spacing:-0.744px;color:#05f0fa;-webkit-text-stroke:0.5px #05f0fa;">Step 2</div>
<svg class="b" style="left:0px;top:0px;pointer-events:none;" width="3360" height="340" viewBox="0 0 3360 340" fill="none"><path d="M702 113C706 150 704 185 695 212C689.600 228.200 672 258 650 266" stroke="#05f0fa" stroke-width="10" fill="none"/><polygon points="606.4,270.6 653,241 658.6,289.4" fill="#05f0fa"/><path d="M2797.7 113C2797.7 200 2845 274.500 2964 278.300" stroke="#05f0fa" stroke-width="10" fill="none"/><polygon points="3012.5,279.7 2962.6,253.6 2962.1,302.8" fill="#05f0fa"/></svg>
</body></html>
